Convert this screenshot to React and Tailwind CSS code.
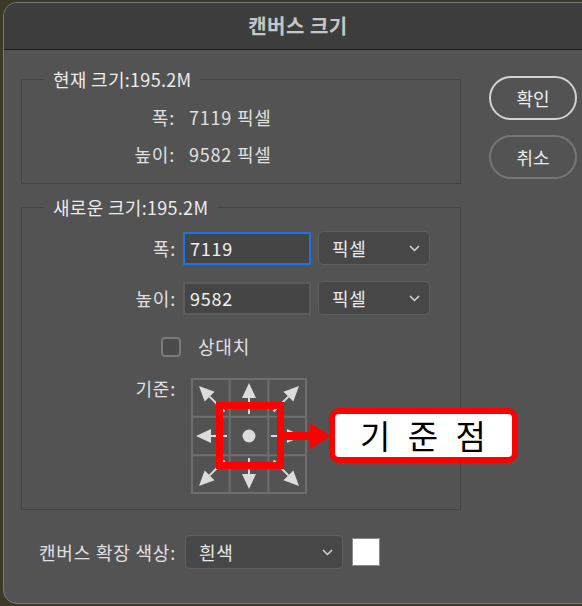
import React from "react";

function Chevron() {
  return (
    <svg width="11" height="7" viewBox="0 0 11 7">
      <path d="M1 1l4.5 4.5L10 1" fill="none" stroke="#d6d6d6" strokeWidth="1.5" />
    </svg>
  );
}

function Select({ value, width }) {
  return (
    <div
      className={`flex h-[34px] items-center justify-between rounded-[5px] border border-[#5f5f5f] bg-[#474747] pl-[13px] pr-[9px] text-[18px] tracking-[0.8px] text-[#e8e8e8] ${width}`}
    >
      <span>{value}</span>
      <Chevron />
    </div>
  );
}

function arrow(tx, ty, ux, uy, len, key) {
  const hl = 15;
  const hw = 7;
  const bx = tx - ux * hl;
  const by = ty - uy * hl;
  const px = -uy;
  const py = ux;
  const ex = tx - ux * len;
  const ey = ty - uy * len;
  return (
    <g key={key}>
      <line x1={bx} y1={by} x2={ex} y2={ey} stroke="#dcdcdc" strokeWidth="2" />
      <polygon
        points={`${tx},${ty} ${bx + px * hw},${by + py * hw} ${bx - px * hw},${by - py * hw}`}
        fill="#dcdcdc"
      />
    </g>
  );
}

function Anchor() {
  const d = Math.SQRT1_2;
  return (
    <svg width="116" height="116" viewBox="0 0 116 116">
      <rect x="1" y="1" width="114" height="114" fill="none" stroke="#6e6e6e" strokeWidth="2" />
      <line x1="38.7" y1="0" x2="38.7" y2="116" stroke="#6e6e6e" strokeWidth="2" />
      <line x1="77.3" y1="0" x2="77.3" y2="116" stroke="#6e6e6e" strokeWidth="2" />
      <line x1="0" y1="38.7" x2="116" y2="38.7" stroke="#6e6e6e" strokeWidth="2" />
      <line x1="0" y1="77.3" x2="116" y2="77.3" stroke="#6e6e6e" strokeWidth="2" />
      {arrow(58, 5, 0, -1, 31, "n")}
      {arrow(58, 111, 0, 1, 31, "s")}
      {arrow(5, 58, -1, 0, 31, "w")}
      {arrow(111, 58, 1, 0, 31, "e")}
      {arrow(8, 8, -d, -d, 36, "nw")}
      {arrow(108, 8, d, -d, 36, "ne")}
      {arrow(8, 108, -d, d, 36, "sw")}
      {arrow(108, 108, d, d, 36, "se")}
      <circle cx="58" cy="58" r="6.5" fill="#dcdcdc" />
    </svg>
  );
}

export default function App() {
  return (
    <div className="relative h-[606px] w-[582px] overflow-hidden bg-[#3b3a28] font-['Noto_Sans_CJK_KR',sans-serif]">
      <div className="ml-[3px] mt-[2px] h-[602px] w-[600px] overflow-hidden rounded-l-[14px] border border-[#7a7a7a] bg-[#535353]">
        {/* title */}
        <div className="flex h-[47px] items-center justify-center border-b border-[#1c1c1c] bg-[#3d3d3d] pr-[10px] text-[20px] font-bold tracking-[0.5px] text-[#c6c6c6]">
          캔버스 크기
        </div>

        <div className="flex pt-[17px]">
          {/* left column */}
          <div className="ml-[17px] w-[440px]">
            <fieldset className="border border-[#444444] pb-[10px]">
              <legend className="ml-[22px] px-[9px] text-[18px] leading-[24px] tracking-[0.3px] text-[#ebebeb]">
                현재 크기:195.2M
              </legend>
              <div className="pt-[8px] text-[18px] tracking-[0.8px] text-[#e0e0e0]">
                <div className="flex h-[37px] items-center">
                  <span className="w-[153px] text-right">폭:</span>
                  <span className="ml-[14px]">7119 픽셀</span>
                </div>
                <div className="flex h-[37px] items-center">
                  <span className="w-[153px] text-right">높이:</span>
                  <span className="ml-[14px]">9582 픽셀</span>
                </div>
              </div>
            </fieldset>

            <fieldset className="mt-[11px] border border-[#444444] pb-[15px]">
              <legend className="ml-[22px] px-[9px] text-[18px] leading-[24px] tracking-[0.3px] text-[#ebebeb]">
                새로운 크기:195.2M
              </legend>
              <div className="pt-[12px] text-[18px] tracking-[0.8px] text-[#e0e0e0]">
                <div className="flex items-center">
                  <span className="w-[154px] text-right">폭:</span>
                  <div className="ml-[7px] flex h-[33px] w-[128px] items-center border-2 border-[#1a73e8] bg-[#454545] px-[5px] text-[#f0f0f0]">
                    7119
                  </div>
                  <div className="ml-[7px]">
                    <Select value="픽셀" width="w-[112px]" />
                  </div>
                </div>
                <div className="mt-[16px] flex items-center">
                  <span className="w-[154px] text-right">높이:</span>
                  <div className="ml-[7px] flex h-[33px] w-[128px] items-center border-2 border-[#5c5c5c] bg-[#454545] px-[5px] text-[#f0f0f0]">
                    9582
                  </div>
                  <div className="ml-[7px]">
                    <Select value="픽셀" width="w-[112px]" />
                  </div>
                </div>
                <div className="mt-[18px] flex items-center">
                  <div className="ml-[139px] h-[20px] w-[20px] rounded-[4px] border-2 border-[#7a7a7a] bg-[#4b4b4b]" />
                  <span className="ml-[17px]">상대치</span>
                </div>
                <div className="mt-[18px] flex items-start">
                  <span className="w-[154px] text-right leading-[20px]">기준:</span>
                  <div className="ml-[15px]">
                    <Anchor />
                  </div>
                </div>
              </div>
            </fieldset>

            <div className="mt-[25px] flex items-center text-[18px] tracking-[0.8px] text-[#e0e0e0]">
              <span className="ml-[18px]">캔버스 확장 색상:</span>
              <div className="ml-[9px]">
                <Select value="흰색" width="w-[158px]" />
              </div>
              <div className="ml-[9px] h-[28px] w-[28px] border border-[#8a8a8a] bg-white" />
            </div>
          </div>

          {/* buttons */}
          <div className="ml-[28px] flex flex-col pt-[9px]">
            <div className="flex h-[44px] w-[88px] items-center justify-center rounded-full border-2 border-[#d2d2d2] text-[18px] text-[#f0f0f0]">
              확인
            </div>
            <div className="mt-[15px] flex h-[44px] w-[88px] items-center justify-center rounded-full border-2 border-[#767676] text-[18px] text-[#e8e8e8]">
              취소
            </div>
          </div>
        </div>
      </div>

      {/* annotation */}
      <div className="absolute left-[216px] top-[402px] h-[67px] w-[68px] border-[7px] border-[#ff0000]" />
      <svg className="absolute left-[283px] top-[422px]" width="50" height="28" viewBox="0 0 50 28">
        <rect x="0" y="10" width="29" height="8" fill="#ff0000" />
        <polygon points="27,1 48,14 27,27" fill="#ff0000" />
      </svg>
      <div className="absolute left-[329px] top-[408px] flex h-[55px] w-[189px] items-center justify-center rounded-[10px] border-[6px] border-[#ff0000] bg-white pl-[4px] text-[33px] leading-none tracking-[5px] text-black">
        기 준 점
      </div>
    </div>
  );
}
